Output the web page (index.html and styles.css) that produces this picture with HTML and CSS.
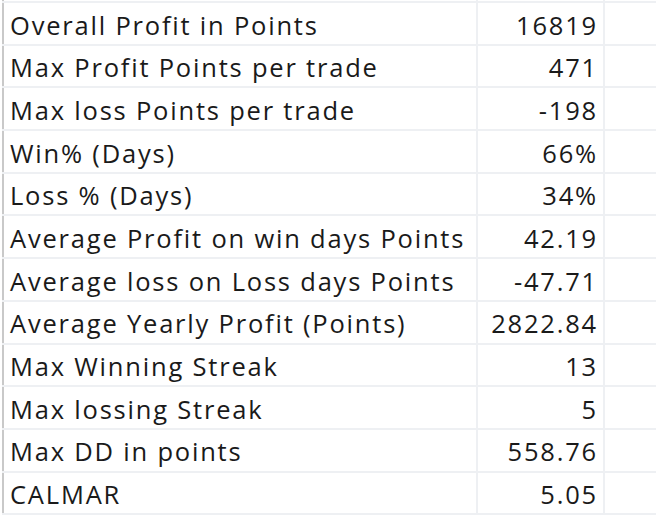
FILE: index.html
```html
<!DOCTYPE html>
<html>
<head>
<meta charset="utf-8">
<link rel="stylesheet" href="styles.css">
</head>
<body>
<table class="sheet">
  <tr class="edge"><td class="label"></td><td class="value"></td><td class="spare"></td></tr>
  <tr><td class="label">Overall Profit in Points</td><td class="value">16819</td><td class="spare"></td></tr>
  <tr><td class="label">Max Profit Points per trade</td><td class="value">471</td><td class="spare"></td></tr>
  <tr><td class="label">Max loss Points per trade</td><td class="value">-198</td><td class="spare"></td></tr>
  <tr><td class="label">Win% (Days)</td><td class="value">66%</td><td class="spare"></td></tr>
  <tr><td class="label">Loss % (Days)</td><td class="value">34%</td><td class="spare"></td></tr>
  <tr><td class="label">Average Profit on win days Points</td><td class="value">42.19</td><td class="spare"></td></tr>
  <tr><td class="label">Average loss on Loss days Points</td><td class="value">-47.71</td><td class="spare"></td></tr>
  <tr><td class="label">Average Yearly Profit (Points)</td><td class="value">2822.84</td><td class="spare"></td></tr>
  <tr><td class="label">Max Winning Streak</td><td class="value">13</td><td class="spare"></td></tr>
  <tr><td class="label">Max lossing Streak</td><td class="value">5</td><td class="spare"></td></tr>
  <tr><td class="label">Max DD in points</td><td class="value">558.76</td><td class="spare"></td></tr>
  <tr><td class="label">CALMAR</td><td class="value">5.05</td><td class="spare"></td></tr>
</table>
</body>
</html>
```
FILE: styles.css
```css
html, body {
  margin: 0;
  padding: 0;
  background: #ffffff;
  overflow: hidden;
}
.sheet {
  border-collapse: collapse;
  table-layout: fixed;
  width: 654px;
  margin-left: 2px;
  font-family: "Open Sans", "Lato", sans-serif;
  font-size: 25.5px;
  font-weight: 500;
  letter-spacing: 1.8px;
  color: #1a1a1a;
  border-left: 2px solid #c9c9c9;
}
.sheet td {
  height: 42.7px;
  padding: 4px 0 0 0;
  border-bottom: 2px solid #eef0f3;
  box-sizing: border-box;
  white-space: nowrap;
  vertical-align: middle;
  line-height: 1;
}
.sheet .edge td {
  height: 2px;
  padding: 0;
}
.label {
  width: 474px;
  padding-left: 6px !important;
  border-right: 2px solid #eef0f3;
}
.value {
  width: 127px;
  text-align: right;
  padding-right: 5px !important;
  border-right: 2px solid #eef0f3;
}
.spare {
  width: auto;
}
```
